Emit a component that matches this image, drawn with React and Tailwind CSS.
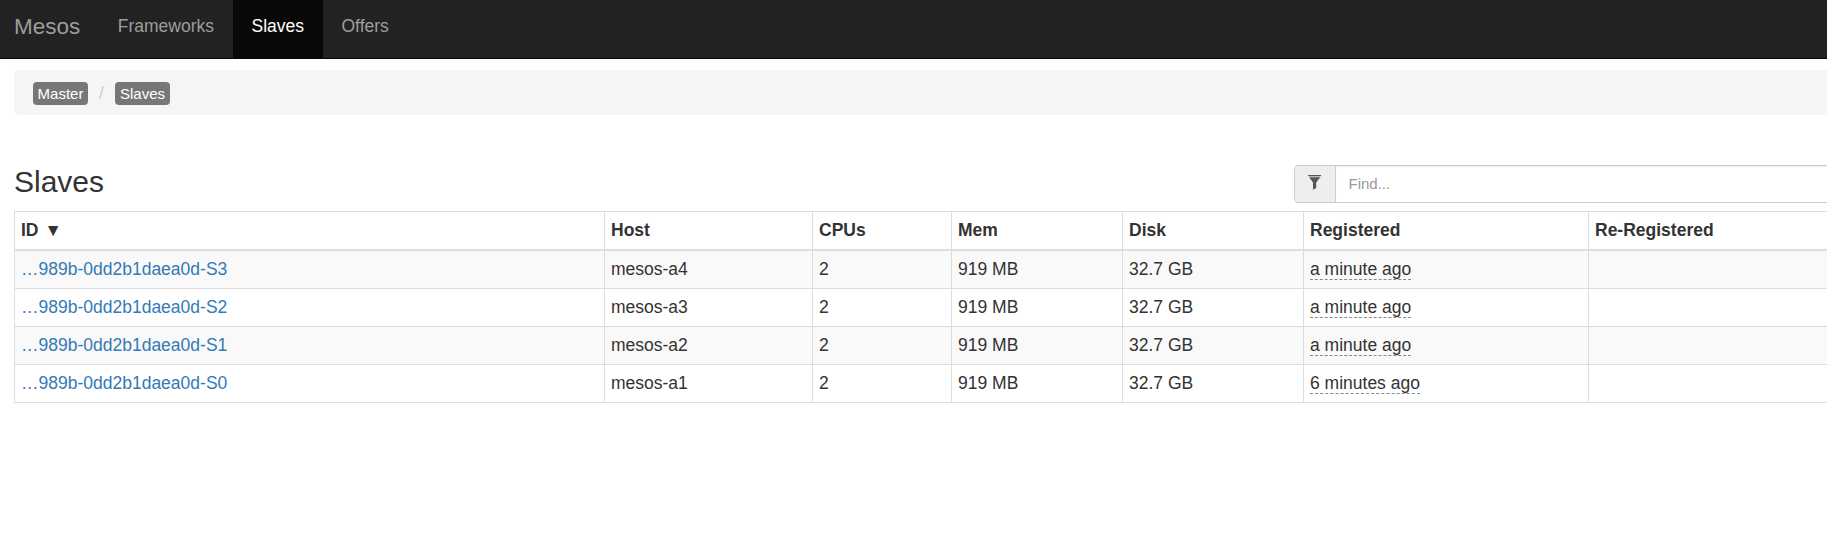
const navItems = [
  { label: "Frameworks", className: "w-[134px] pl-[18.75px] text-[#9d9d9d]" },
  { label: "Slaves", className: "w-[90px] pl-[18.5px] bg-[#080808] text-white" },
  { label: "Offers", className: "w-[84px] pl-[18.5px] text-[#9d9d9d]" },
];

const slaves = [
  { id: "…989b-0dd2b1daea0d-S3", host: "mesos-a4", registered: "a minute ago" },
  { id: "…989b-0dd2b1daea0d-S2", host: "mesos-a3", registered: "a minute ago" },
  { id: "…989b-0dd2b1daea0d-S1", host: "mesos-a2", registered: "a minute ago" },
  { id: "…989b-0dd2b1daea0d-S0", host: "mesos-a1", registered: "6 minutes ago" },
];

function Navbar() {
  return (
    <nav className="flex h-[59px] border-b border-[#080808] bg-[#222222]">
      <a className="w-[99px] pl-[14px] pt-[14px] text-[22.5px] leading-[25px] text-[#9d9d9d]">Mesos</a>
      {navItems.map((item) => (
        <a key={item.label} className={`h-[58px] pt-[14px] leading-[25px] ${item.className}`}>
          {item.label}
        </a>
      ))}
    </nav>
  );
}

function Crumb({ children }) {
  return (
    <a className="h-[23px] w-[55px] rounded-[4px] bg-[#777777] text-center text-[15px] leading-[24px] text-white">
      {children}
    </a>
  );
}

function FilterIcon() {
  return (
    <svg width="14" height="16" viewBox="0 0 14 16" className="ml-[13px] mt-[9px]" aria-hidden="true">
      <rect x="0.2" y="0" width="12.8" height="1.1" fill="#555555" />
      <rect x="1" y="1.1" width="11.4" height="1.2" fill="#b5b5b5" />
      <path d="M1.2 2.2H12.2L8.2 7.6V13L5 14.8V7.6Z" fill="#555555" />
    </svg>
  );
}

function HeadCell({ children }) {
  return (
    <th className="h-[39px] border-b-2 border-l border-[#dddddd] p-0 pl-[6px] text-left align-middle font-bold leading-[25px]">
      {children}
    </th>
  );
}

function Cell({ children }) {
  return (
    <td className="h-[38px] border-b border-l border-[#dddddd] p-0 pl-[6px] align-middle leading-[25px]">
      {children}
    </td>
  );
}

export default function App() {
  return (
    <div className="h-[560px] overflow-hidden bg-white font-['Liberation_Sans',Arial,sans-serif] text-[17.5px] text-[#333333]">
      <Navbar />
      <div className="w-[1860px] pl-[14px]">
        <div className="mt-[11px] flex h-[45px] rounded-[5px] bg-[#f5f5f5] pl-[19px] pt-[12px]">
          <Crumb>Master</Crumb>
          <span className="w-[27px] pl-[11px] leading-[22px] text-[#cccccc]">/</span>
          <Crumb>Slaves</Crumb>
        </div>

        <div className="mt-[50px] flex h-[46px] justify-between">
          <h2 className="text-[30px] leading-[33px]">Slaves</h2>
          <div className="flex h-[38px] w-[566px] rounded-[4px] border border-[#cccccc]">
            <div className="w-[41px] rounded-l-[3px] border-r border-[#cccccc] bg-[#eeeeee]">
              <FilterIcon />
            </div>
            <input
              placeholder="Find..."
              className="min-w-0 flex-1 pl-[12.5px] text-[15px] shadow-[inset_0_1px_1px_rgba(0,0,0,0.075)] outline-none placeholder:text-[#999999] placeholder:opacity-100"
            />
          </div>
        </div>

        <table className="w-[1846px] table-fixed border-separate border-spacing-0 border-t border-[#dddddd]">
          <colgroup>
            <col className="w-[590px]" />
            <col className="w-[208px]" />
            <col className="w-[139px]" />
            <col className="w-[171px]" />
            <col className="w-[181px]" />
            <col className="w-[285px]" />
            <col className="w-[272px]" />
          </colgroup>
          <thead>
            <tr>
              <HeadCell>
                ID <span className="ml-[1px]">▼</span>
              </HeadCell>
              <HeadCell>Host</HeadCell>
              <HeadCell>CPUs</HeadCell>
              <HeadCell>Mem</HeadCell>
              <HeadCell>Disk</HeadCell>
              <HeadCell>Registered</HeadCell>
              <HeadCell>Re-Registered</HeadCell>
            </tr>
          </thead>
          <tbody>
            {slaves.map((slave) => (
              <tr key={slave.id} className="odd:bg-[#f9f9f9]">
                <Cell>
                  <a className="text-[#337ab7]">{slave.id}</a>
                </Cell>
                <Cell>{slave.host}</Cell>
                <Cell>2</Cell>
                <Cell>919 MB</Cell>
                <Cell>32.7 GB</Cell>
                <Cell>
                  <span className="border-b border-dashed border-[#888888]">{slave.registered}</span>
                </Cell>
                <Cell />
              </tr>
            ))}
          </tbody>
        </table>
      </div>
    </div>
  );
}
